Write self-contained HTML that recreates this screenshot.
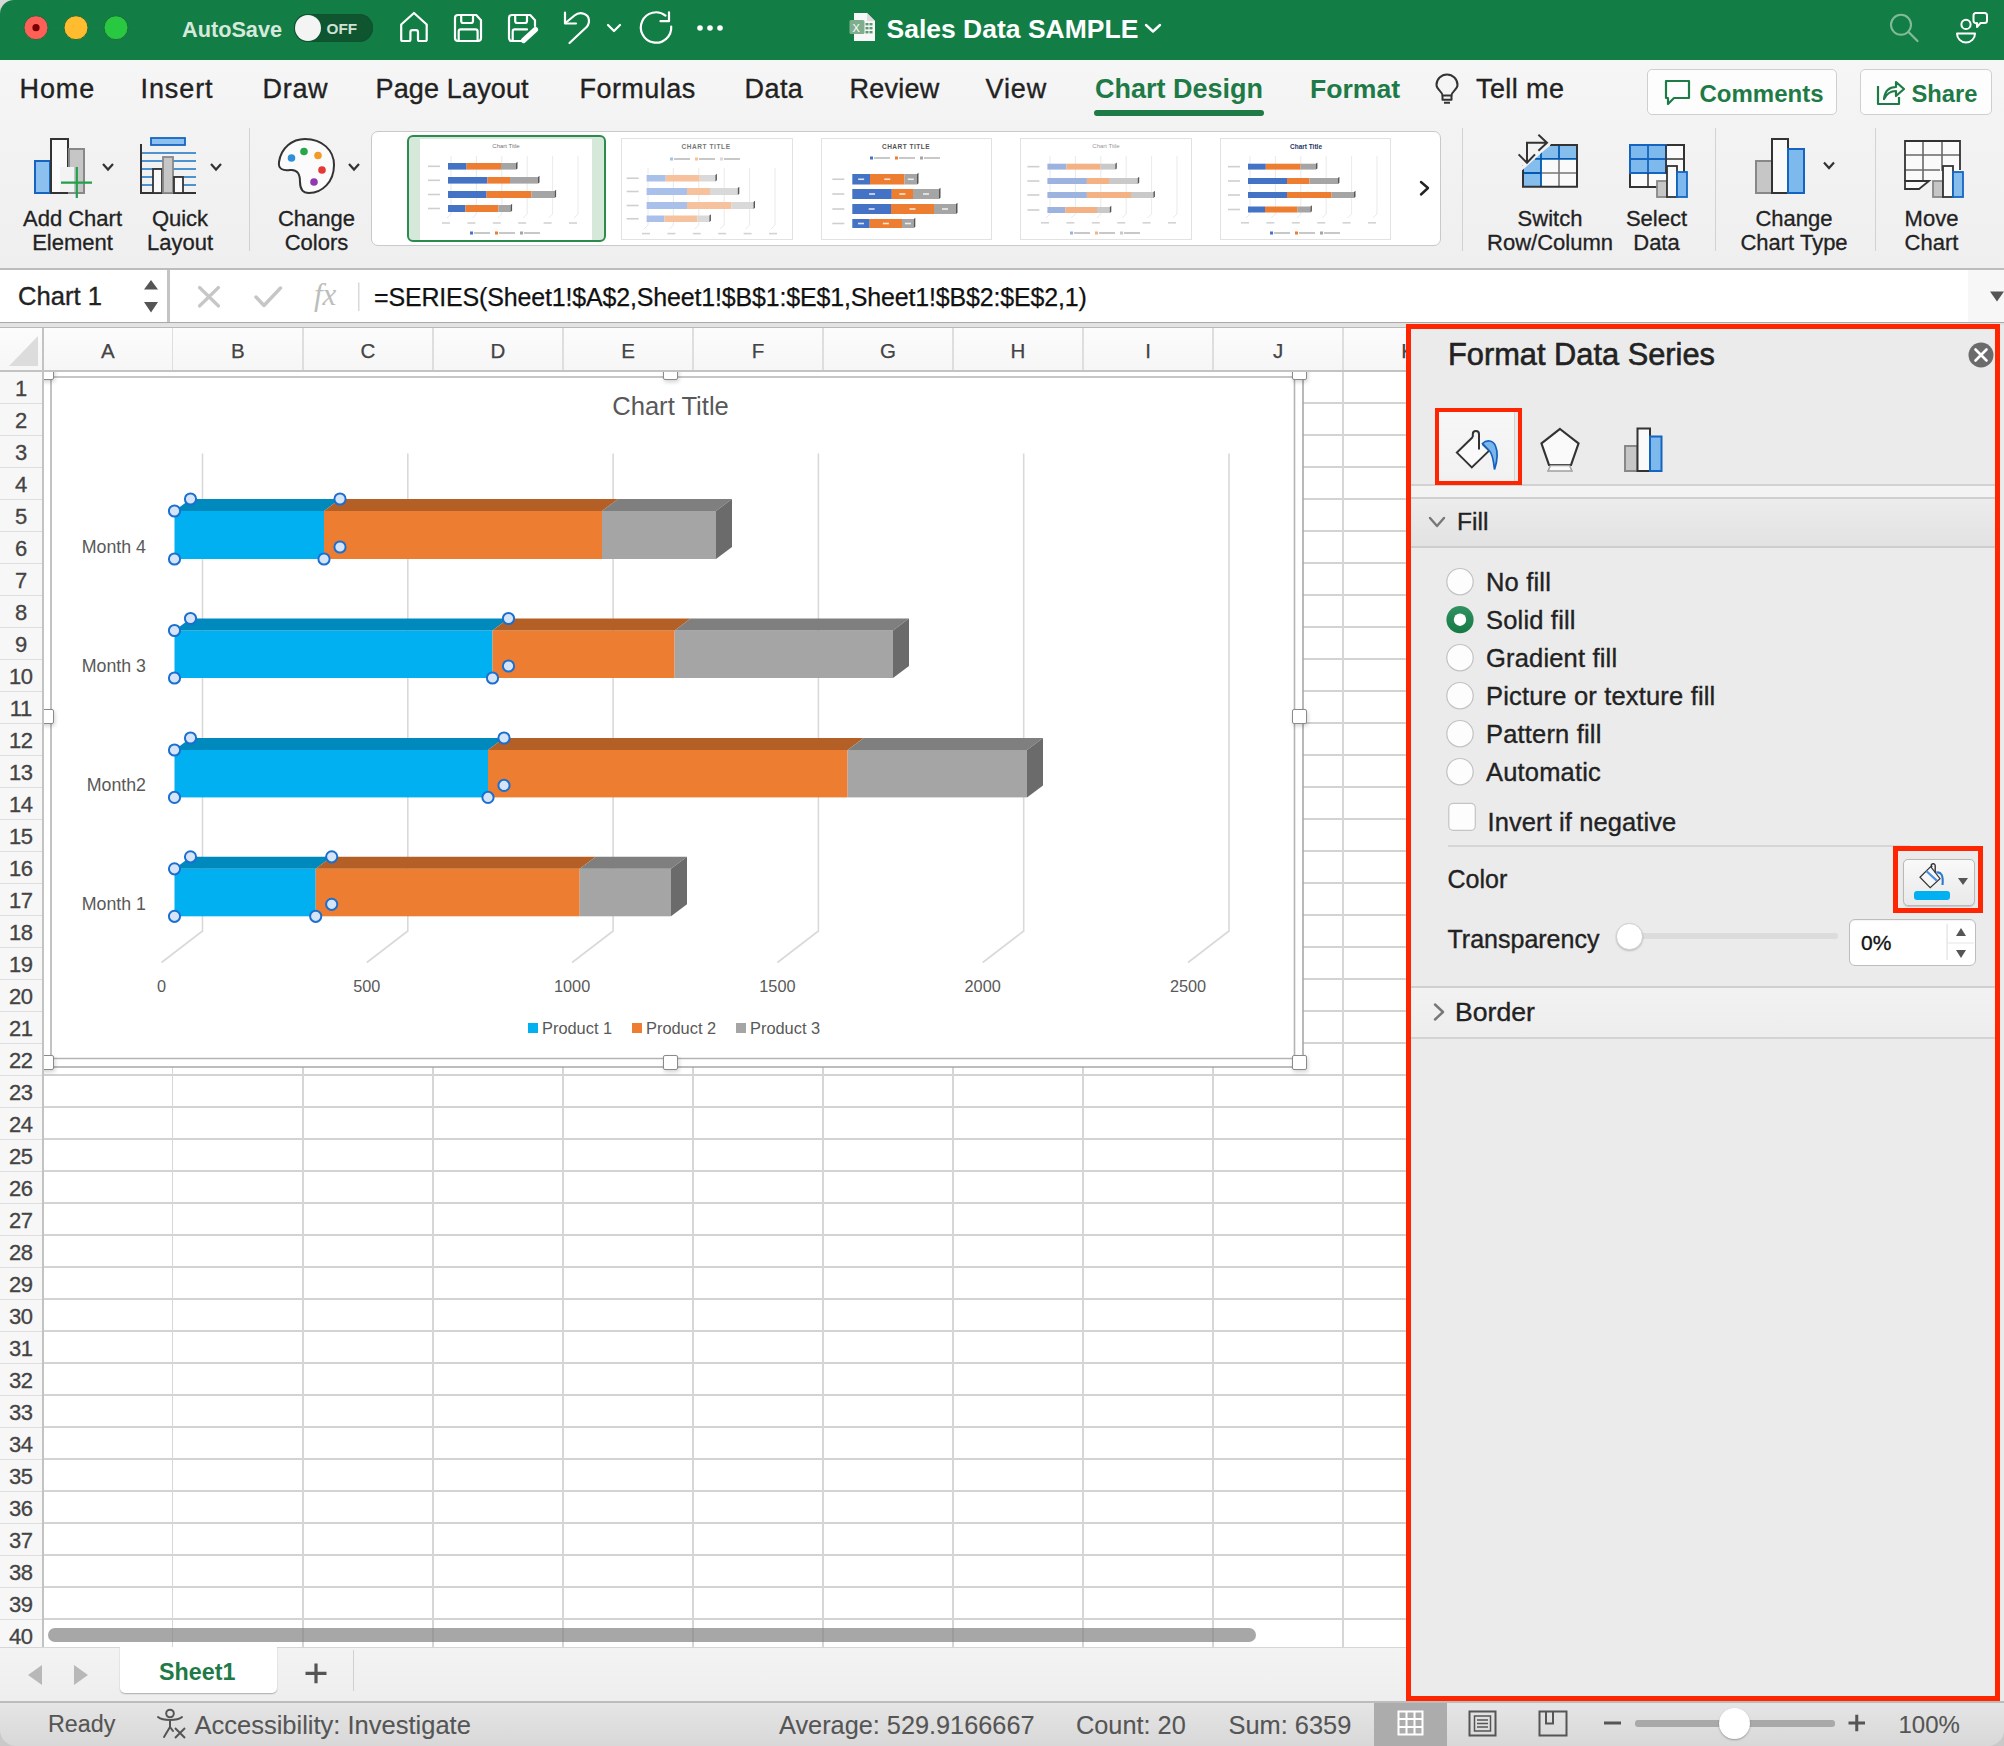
<!DOCTYPE html>
<html><head><meta charset="utf-8"><title>Excel</title>
<style>
*{box-sizing:border-box;margin:0;padding:0}
html,body{width:2004px;height:1746px;overflow:hidden;background:#fff}
body{position:relative;font-family:"Liberation Sans",sans-serif;color:#222}
.a{position:absolute}
.t{position:absolute;white-space:nowrap;line-height:1}
svg{position:absolute;overflow:visible}
</style></head><body>

<div class="a" style="left:0;top:0;width:2004px;height:60px;background:#127e45"></div>
<!-- window corner -->
<svg style="left:0;top:0" width="14" height="14"><path d="M0 0 H14 A14 14 0 0 0 0 14 Z" fill="#d8d8d8"/></svg>
<!-- traffic lights -->
<svg style="left:0;top:0" width="140" height="60">
 <circle cx="36" cy="27.7" r="12" fill="#fe5f57" stroke="#1d6b3c" stroke-width="1"/>
 <circle cx="36" cy="27.7" r="3.6" fill="#7a0000"/>
 <circle cx="76" cy="27.7" r="12" fill="#febc2e" stroke="#1d6b3c" stroke-width="1"/>
 <circle cx="116" cy="27.7" r="12" fill="#28c840" stroke="#1d6b3c" stroke-width="1"/>
</svg>
<div class="t" style="left:182px;top:18.5px;font-size:21.7px;color:#d7e9dd;font-weight:bold;">AutoSave</div>

<div class="a" style="left:294px;top:14px;width:79px;height:28px;border-radius:14px;background:#0f5530;box-shadow:inset 0 0 1px rgba(0,0,0,.4)"></div>
<div class="a" style="left:295px;top:15px;width:26px;height:26px;border-radius:13px;background:#f4f4f4"></div>
<div class="t" style="left:326.5px;top:21px;font-size:15.3px;color:#cfe2d5;font-weight:bold;">OFF</div>

<svg style="left:0;top:0" width="760" height="60" fill="none" stroke="#fff" stroke-width="2.2" stroke-linejoin="round" stroke-linecap="round">
 <!-- home -->
 <path d="M401.2 24.5 L414 13 L426.7 24.5 V39.5 Q426.7 41 425.2 41 H419.5 Q418 41 418 39.5 V32.2 Q418 30.2 416 30.2 H412.4 Q410.4 30.2 410.4 32.2 V39.5 Q410.4 41 408.9 41 H402.7 Q401.2 41 401.2 39.5 Z"/>
 <!-- save -->
 <path d="M458 15 H476.2 L481 20.2 V38 Q481 41 478 41 H458 Q455 41 455 38 V18 Q455 15 458 15 Z"/>
 <path d="M461.2 15 V21 Q461.2 23 463.2 23 H471 Q473 23 473 21 V15"/>
 <path d="M458.7 41 V31.4 Q458.7 29.4 460.7 29.4 H475.6 Q477.6 29.4 477.6 31.4 V41"/>
 <!-- save as -->
 <path d="M521 41 H512 Q509 41 509 38 V18 Q509 15 512 15 H530.2 L535 20.2 V26"/>
 <path d="M515.2 15 V21 Q515.2 23 517.2 23 H525 Q527 23 527 21 V15"/>
 <path d="M512.7 41 V31.4 Q512.7 29.4 514.7 29.4 H527"/>
 <path d="M523.5 40.5 L535.5 29.5" stroke-width="5.2"/>
 <!-- undo -->
 <path d="M565 12.5 V23.5 H576"/>
 <path d="M566 22.5 L574.5 15.5 C580 11 589 13.5 589 21 C589 24.5 587.5 26.5 585 28.5 L569.5 43"/>
 <!-- chevron -->
 <path d="M608 25 L614 31 L620 25"/>
 <!-- redo -->
 <path d="M671.2 26.5 A15.2 15.2 0 1 1 665.5 15.6"/>
 <path d="M669 12.3 V21.2 H660.5"/>
</svg>
<svg style="left:0;top:0" width="760" height="60">
 <circle cx="700" cy="28" r="2.8" fill="#fff"/><circle cx="710" cy="28" r="2.8" fill="#fff"/><circle cx="720" cy="28" r="2.8" fill="#fff"/>
</svg>
<!-- doc icon -->
<svg style="left:848px;top:12px" width="32" height="32">
 <path d="M6 1 H19 L27 9 V29 H6 Z" fill="#f7f7f7"/>
 <path d="M19 1 V9 H27" fill="#dcdcdc"/>
 <rect x="1.5" y="8" width="15" height="14" rx="1.5" fill="#7fae8f"/>
 <text x="4.5" y="19.5" font-size="11" fill="#fff" font-family="Liberation Sans">X</text>
 <g fill="#5a9a6e"><rect x="17.5" y="11" width="3" height="2.4"/><rect x="21.5" y="11" width="3" height="2.4"/><rect x="17.5" y="15" width="3" height="2.4"/><rect x="21.5" y="15" width="3" height="2.4"/><rect x="17.5" y="19" width="3" height="2.4"/><rect x="21.5" y="19" width="3" height="2.4"/></g>
</svg>
<div class="t" style="left:886.5px;top:15.5px;font-size:26.5px;color:#ffffff;font-weight:bold;">Sales Data SAMPLE</div>

<svg style="left:0;top:0" width="2004" height="60" fill="none" stroke-linecap="round" stroke-linejoin="round">
 <path d="M1146 25 L1153 31.5 L1160 25" stroke="#fff" stroke-width="2.4"/>
 <circle cx="1901" cy="24.8" r="10" stroke="#82bb98" stroke-width="2"/>
 <path d="M1908.5 32 L1917.5 41" stroke="#82bb98" stroke-width="2.2"/>
 <circle cx="1966" cy="24.4" r="4.6" stroke="#fff" stroke-width="2"/>
 <path d="M1957 33.5 H1975 A9 9 0 0 1 1957 33.5 Z" stroke="#fff" stroke-width="2"/>
 <path d="M1975.5 13 H1985 A2.5 2.5 0 0 1 1987 15.5 V20.5 A2.5 2.5 0 0 1 1984.5 23 H1980.5 L1977 27 V23 A2.5 2.5 0 0 1 1973.5 20.5 V15.5 A2.5 2.5 0 0 1 1975.5 13 Z" stroke="#fff" stroke-width="2"/>
</svg>

<div class="a" style="left:0;top:60px;width:2004px;height:209px;background:linear-gradient(#f6f6f6,#f3f3f3 30%,#efefef)"></div>
<div class="a" style="left:0;top:268px;width:2004px;height:2px;background:#bdbdbd"></div>
<div class="t" style="left:19.5px;top:76px;font-size:27px;color:#222;font-weight:normal;letter-spacing:0.9px;-webkit-text-stroke:0.35px #222">Home</div>
<div class="t" style="left:140.5px;top:76px;font-size:27px;color:#222;font-weight:normal;letter-spacing:0.9px;-webkit-text-stroke:0.35px #222">Insert</div>
<div class="t" style="left:262.5px;top:76px;font-size:27px;color:#222;font-weight:normal;letter-spacing:0.7px;-webkit-text-stroke:0.35px #222">Draw</div>
<div class="t" style="left:375.5px;top:76px;font-size:27px;color:#222;font-weight:normal;letter-spacing:0.15px;-webkit-text-stroke:0.35px #222">Page Layout</div>
<div class="t" style="left:579.5px;top:76px;font-size:27px;color:#222;font-weight:normal;letter-spacing:0.45px;-webkit-text-stroke:0.35px #222">Formulas</div>
<div class="t" style="left:744.5px;top:76px;font-size:27px;color:#222;font-weight:normal;letter-spacing:0.45px;-webkit-text-stroke:0.35px #222">Data</div>
<div class="t" style="left:849.5px;top:76px;font-size:27px;color:#222;font-weight:normal;letter-spacing:0.25px;-webkit-text-stroke:0.35px #222">Review</div>
<div class="t" style="left:985.5px;top:76px;font-size:27px;color:#222;font-weight:normal;letter-spacing:0.9px;-webkit-text-stroke:0.35px #222">View</div>
<div class="t" style="left:1095px;top:76px;font-size:27px;color:#1e7a46;font-weight:bold;">Chart Design</div>
<div class="t" style="left:1310px;top:76px;font-size:26.6px;color:#1e7a46;font-weight:bold;">Format</div>
<div class="t" style="left:1476px;top:76px;font-size:27px;color:#222;font-weight:normal;letter-spacing:0.4px;-webkit-text-stroke:0.35px #222">Tell me</div>

<div class="a" style="left:1094px;top:110px;width:170px;height:6px;border-radius:3px;background:#1e7a46"></div>
<svg style="left:0;top:0" width="2004" height="130" fill="none" stroke="#333" stroke-width="2" stroke-linejoin="round">
 <path d="M1442.5 95.5 C1442.5 91.5 1436.5 89.5 1436.5 85 A10.5 10.5 0 0 1 1457.5 85 C1457.5 89.5 1451.5 91.5 1451.5 95.5 Z"/>
 <path d="M1442.5 95.5 V99.8 H1451.5 V95.5 M1444 102.8 H1450"/>
</svg>
<div class="a" style="left:1647px;top:69px;width:190px;height:46px;border-radius:5px;background:#fdfdfd;border:1.5px solid #cfcfcf"></div>
<div class="a" style="left:1860px;top:69px;width:132px;height:46px;border-radius:5px;background:#fdfdfd;border:1.5px solid #cfcfcf"></div>
<svg style="left:0;top:0" width="2004" height="130" fill="none" stroke="#1e7a46" stroke-width="2.2" stroke-linejoin="round">
 <path d="M1666 81 H1689 V98 H1674 L1668 104 V98 H1666 Z"/>
 <path d="M1878 86 V104 H1899 V97"/>
 <path d="M1884 99 C1885 90 1890 87 1896 87 V82 L1904 89 L1896 96 V91 C1891 91 1887 93 1884 99 Z"/>
</svg>
<div class="t" style="left:1699.5px;top:81.5px;font-size:24px;color:#1e7a46;font-weight:bold;">Comments</div>
<div class="t" style="left:1911.5px;top:81.5px;font-size:23.75px;color:#1e7a46;font-weight:bold;">Share</div>

<div class="a" style="left:248.5px;top:128px;width:1.5px;height:123px;background:#d2d2d2"></div>
<div class="a" style="left:1461.5px;top:128px;width:1.5px;height:123px;background:#d2d2d2"></div>
<div class="a" style="left:1714.5px;top:128px;width:1.5px;height:123px;background:#d2d2d2"></div>
<div class="a" style="left:1874.5px;top:128px;width:1.5px;height:123px;background:#d2d2d2"></div>
<div class="t" style="left:-77.5px;width:300px;text-align:center;top:208px;font-size:22px;color:#222;-webkit-text-stroke:0.3px #222">Add Chart</div>
<div class="t" style="left:-77.5px;width:300px;text-align:center;top:232px;font-size:22px;color:#222;-webkit-text-stroke:0.3px #222">Element</div>
<div class="t" style="left:30px;width:300px;text-align:center;top:208px;font-size:22px;color:#222;-webkit-text-stroke:0.3px #222">Quick</div>
<div class="t" style="left:30px;width:300px;text-align:center;top:232px;font-size:22px;color:#222;-webkit-text-stroke:0.3px #222">Layout</div>
<div class="t" style="left:166.5px;width:300px;text-align:center;top:208px;font-size:22px;color:#222;-webkit-text-stroke:0.3px #222">Change</div>
<div class="t" style="left:166.5px;width:300px;text-align:center;top:232px;font-size:22px;color:#222;-webkit-text-stroke:0.3px #222">Colors</div>
<div class="t" style="left:1400px;width:300px;text-align:center;top:208px;font-size:22px;color:#222;-webkit-text-stroke:0.3px #222">Switch</div>
<div class="t" style="left:1400px;width:300px;text-align:center;top:232px;font-size:22px;color:#222;-webkit-text-stroke:0.3px #222">Row/Column</div>
<div class="t" style="left:1506.5px;width:300px;text-align:center;top:208px;font-size:22px;color:#222;-webkit-text-stroke:0.3px #222">Select</div>
<div class="t" style="left:1506.5px;width:300px;text-align:center;top:232px;font-size:22px;color:#222;-webkit-text-stroke:0.3px #222">Data</div>
<div class="t" style="left:1644px;width:300px;text-align:center;top:208px;font-size:22px;color:#222;-webkit-text-stroke:0.3px #222">Change</div>
<div class="t" style="left:1644px;width:300px;text-align:center;top:232px;font-size:22px;color:#222;-webkit-text-stroke:0.3px #222">Chart Type</div>
<div class="t" style="left:1781.5px;width:300px;text-align:center;top:208px;font-size:22px;color:#222;-webkit-text-stroke:0.3px #222">Move</div>
<div class="t" style="left:1781.5px;width:300px;text-align:center;top:232px;font-size:22px;color:#222;-webkit-text-stroke:0.3px #222">Chart</div>

<svg style="left:0;top:0" width="2004" height="270" stroke-linejoin="miter">
 <!-- Add chart element -->
 <rect x="35" y="161" width="15" height="32" fill="#8cc0ef" stroke="#1565c0" stroke-width="2"/>
 <rect x="51" y="139" width="17" height="54" fill="#fafafa" stroke="#333" stroke-width="2"/>
 <rect x="69" y="149" width="15" height="44" fill="#c6c6c6" stroke="#888" stroke-width="2"/>
 <rect x="60" y="167" width="14" height="25" fill="#f3f3f3"/>
 <path d="M61 182.6 H92 M76.8 167 V198" stroke="#22a04b" stroke-width="2.2" fill="none"/>
 <path d="M103 164 L108 169.5 L113 164" stroke="#333" stroke-width="2.2" fill="none"/>
 <!-- Quick layout -->
 <path d="M141 144 V193 H196" stroke="#333" stroke-width="2" fill="none"/>
 <path d="M142 153 H196 M142 161 H196 M142 169 H196 M142 177 H196 M142 185 H196" stroke="#1a73c8" stroke-width="1.6"/>
 <rect x="151" y="138" width="34" height="7" fill="#8cc0ef" stroke="#1565c0" stroke-width="1.8"/>
 <rect x="153" y="169" width="9" height="24" fill="#fafafa" stroke="#333" stroke-width="1.8"/>
 <rect x="163" y="157" width="10" height="36" fill="#c6c6c6" stroke="#888" stroke-width="1.8"/>
 <rect x="174" y="177" width="9" height="16" fill="#fafafa" stroke="#333" stroke-width="1.8"/>
 <path d="M211 164 L216 169.5 L221 164" stroke="#333" stroke-width="2.2" fill="none"/>
 <!-- palette -->
 <path d="M305 139 C322 139 334 150 334 165 C334 182 322 193 309 193 C301 193 300 187 300 182 C300 175 298 169 290 170 C283 171 278 169 279 162 C281 148 292 139 305 139 Z" fill="#fbfbfb" stroke="#333" stroke-width="2"/>
 <circle cx="291.5" cy="158" r="3.8" fill="#2f8fd8"/>
 <circle cx="304" cy="151.5" r="3.8" fill="#2aa64a"/>
 <circle cx="318" cy="155.5" r="3.8" fill="#f39a2a"/>
 <circle cx="322" cy="170" r="3.8" fill="#e53935"/>
 <circle cx="314" cy="182" r="3.8" fill="#8e3ab0"/>
 <path d="M349 164 L354 169.5 L359 164" stroke="#333" stroke-width="2.2" fill="none"/>

 <!-- switch row/column -->
 <path d="M1523 166 L1551 145 H1577 V186.8 H1523 Z" fill="#fafafa"/>
 <path d="M1524 166 L1551 145 H1577 V158.8 H1541 V186.8 H1523 V166 Z" fill="#85bdec"/>
 <path d="M1559 158.8 V186.8 M1541 173 H1577" stroke="#777" stroke-width="1.6" fill="none"/>
 <path d="M1541 152 V186.8 M1559 145 V158.8 M1535 158.8 H1577 M1523 173 H1541" stroke="#0058b0" stroke-width="1.8" fill="none"/>
 <path d="M1523 165 V186.8 H1577 V145 H1550" stroke="#333" stroke-width="2" fill="none"/>
 <path d="M1521 169 L1553 140" stroke="#f3f3f3" stroke-width="3.5"/>
 <path d="M1527 162 V142.8 H1546.5 M1518.6 154.4 L1527 162.8 L1535 154.4 M1538.4 134.8 L1547 142.8 L1538.4 150.8" stroke="#333" stroke-width="2" fill="none"/>
 <!-- select data -->
 <rect x="1630" y="145" width="54" height="42" fill="#fafafa" stroke="#333" stroke-width="2"/>
 <rect x="1630" y="145" width="36" height="28" fill="#7db9ec" stroke="#1565c0" stroke-width="2"/>
 <path d="M1648 145 V173 M1630 159 H1666" stroke="#1565c0" stroke-width="1.8"/>
 <path d="M1666 145 V173 H1684 M1666 159 H1684 M1648 173 V187" stroke="#333" stroke-width="1.5" fill="none"/>
 <rect x="1657" y="181" width="10" height="16" fill="#c6c6c6" stroke="#888" stroke-width="1.8"/>
 <rect x="1667" y="166" width="10" height="31" fill="#fafafa" stroke="#333" stroke-width="1.8"/>
 <rect x="1677" y="172" width="10" height="25" fill="#7db9ec" stroke="#1565c0" stroke-width="1.8"/>
 <!-- change chart type -->
 <rect x="1756" y="161" width="16" height="32" fill="#c6c6c6" stroke="#888" stroke-width="2"/>
 <rect x="1772" y="139" width="16" height="54" fill="#fafafa" stroke="#333" stroke-width="2"/>
 <rect x="1788" y="149" width="16" height="44" fill="#7db9ec" stroke="#1565c0" stroke-width="2"/>
 <path d="M1824 162.5 L1829 168 L1834 162.5" stroke="#333" stroke-width="2.2" fill="none"/>
 <!-- move chart -->
 <rect x="1905" y="141" width="55" height="40" fill="#fafafa"/>
 <path d="M1923 141 V185 M1942 141 V171 M1905 155 H1960 M1905 170 H1940" stroke="#6a6a6a" stroke-width="1.6" fill="none"/>
 <path d="M1905 181 V141 H1960 V170" stroke="#333" stroke-width="1.8" fill="none"/>
 <path d="M1905 181 H1929 L1919 189 H1905 Z" fill="#fafafa" stroke="#333" stroke-width="1.8" stroke-linejoin="miter"/>
 <rect x="1933" y="181" width="10" height="16" fill="#c6c6c6" stroke="#888" stroke-width="1.8"/>
 <rect x="1943" y="166" width="10" height="31" fill="#fafafa" stroke="#333" stroke-width="1.8"/>
 <rect x="1953" y="172" width="10" height="25" fill="#85bdec" stroke="#1565c0" stroke-width="1.8"/>
</svg>

<div class="a" style="left:371px;top:130.5px;width:1070px;height:115px;border-radius:7px;background:#fff;border:1.5px solid #c9c9c9"></div>
<div class="a" style="left:406.5px;top:134.5px;width:199px;height:107px;border-radius:6px;background:#d6e8da;border:2.5px solid #2e8b4e"></div>
<div class="a" style="left:420px;top:138.5px;width:171.5px;height:101.5px;background:#fff"></div>
<div class="a" style="left:620.5px;top:138px;width:172px;height:102px;background:#fff;border:1px solid #e2e2e2"></div>
<div class="a" style="left:820.5px;top:138px;width:171px;height:102px;background:#fff;border:1px solid #e2e2e2"></div>
<div class="a" style="left:1020px;top:138px;width:172px;height:102px;background:#fff;border:1px solid #e2e2e2"></div>
<div class="a" style="left:1220px;top:138px;width:171px;height:102px;background:#fff;border:1px solid #e2e2e2"></div>
<svg style="left:0;top:0" width="2004" height="270" fill="none">
 <path d="M1421 182 L1428 188 L1421 194.5" stroke="#222" stroke-width="2.4" stroke-linejoin="round" stroke-linecap="round"/>
</svg>
<svg style="left:0;top:0" width="2004" height="270">
<path d="M451.0 156 V214 L447.0 218" stroke="#e3e3e3" stroke-width="0.8" fill="none"/><path d="M476.4 156 V214 L472.4 218" stroke="#e3e3e3" stroke-width="0.8" fill="none"/><path d="M501.8 156 V214 L497.8 218" stroke="#e3e3e3" stroke-width="0.8" fill="none"/><path d="M527.2 156 V214 L523.2 218" stroke="#e3e3e3" stroke-width="0.8" fill="none"/><path d="M552.6 156 V214 L548.6 218" stroke="#e3e3e3" stroke-width="0.8" fill="none"/><path d="M578.0 156 V214 L574.0 218" stroke="#e3e3e3" stroke-width="0.8" fill="none"/><rect x="448" y="163" width="18.600000000000023" height="6.599999999999994" fill="#4472c4"/><rect x="466.6" y="163" width="34.39999999999998" height="6.599999999999994" fill="#ed7d31"/><rect x="501" y="163" width="15" height="6.599999999999994" fill="#a5a5a5"/><path d="M516 163 l1.5 -1.2 v6.599999999999994 l-1.5 1.2 Z" fill="#555"/><rect x="448" y="177" width="39.39999999999998" height="6.599999999999994" fill="#4472c4"/><rect x="487.4" y="177" width="22.600000000000023" height="6.599999999999994" fill="#ed7d31"/><rect x="510" y="177" width="28" height="6.599999999999994" fill="#a5a5a5"/><path d="M538 177 l1.5 -1.2 v6.599999999999994 l-1.5 1.2 Z" fill="#555"/><rect x="448" y="191" width="38.60000000000002" height="7" fill="#4472c4"/><rect x="486.6" y="191" width="44.799999999999955" height="7" fill="#ed7d31"/><rect x="531.4" y="191" width="23.200000000000045" height="7" fill="#a5a5a5"/><path d="M554.6 191 l1.5 -1.2 v7 l-1.5 1.2 Z" fill="#555"/><rect x="448" y="205" width="17.399999999999977" height="7" fill="#4472c4"/><rect x="465.4" y="205" width="33.0" height="7" fill="#ed7d31"/><rect x="498.4" y="205" width="12.200000000000045" height="7" fill="#a5a5a5"/><path d="M510.6 205 l1.5 -1.2 v7 l-1.5 1.2 Z" fill="#555"/><rect x="428" y="165.5" width="12" height="1.6" fill="#cfcfcf"/><rect x="428" y="179.5" width="12" height="1.6" fill="#cfcfcf"/><rect x="428" y="193.7" width="12" height="1.6" fill="#cfcfcf"/><rect x="428" y="207.7" width="12" height="1.6" fill="#cfcfcf"/><rect x="442.0" y="222.2" width="8" height="1.6" fill="#d3d3d3"/><rect x="467.4" y="222.2" width="8" height="1.6" fill="#d3d3d3"/><rect x="492.8" y="222.2" width="8" height="1.6" fill="#d3d3d3"/><rect x="518.2" y="222.2" width="8" height="1.6" fill="#d3d3d3"/><rect x="543.6" y="222.2" width="8" height="1.6" fill="#d3d3d3"/><rect x="569.0" y="222.2" width="8" height="1.6" fill="#d3d3d3"/><text x="506" y="148" text-anchor="middle" font-family="Liberation Sans" font-size="6" fill="#777">Chart Title</text><rect x="470" y="231.5" width="3" height="3" fill="#4472c4"/><rect x="474" y="232" width="16" height="2" fill="#c8c8c8"/><rect x="495" y="231.5" width="3" height="3" fill="#ed7d31"/><rect x="499" y="232" width="16" height="2" fill="#c8c8c8"/><rect x="520" y="231.5" width="3" height="3" fill="#a5a5a5"/><rect x="524" y="232" width="16" height="2" fill="#c8c8c8"/></svg>
<svg style="left:0;top:0" width="2004" height="270">
<path d="M648.0 168 V225 L644.0 229" stroke="#e3e3e3" stroke-width="0.8" fill="none"/><path d="M673.4 168 V225 L669.4 229" stroke="#e3e3e3" stroke-width="0.8" fill="none"/><path d="M698.8 168 V225 L694.8 229" stroke="#e3e3e3" stroke-width="0.8" fill="none"/><path d="M724.2 168 V225 L720.2 229" stroke="#e3e3e3" stroke-width="0.8" fill="none"/><path d="M749.6 168 V225 L745.6 229" stroke="#e3e3e3" stroke-width="0.8" fill="none"/><path d="M775.0 168 V225 L771.0 229" stroke="#e3e3e3" stroke-width="0.8" fill="none"/><rect x="646.6" y="175" width="19.100000000000023" height="6.5" fill="#a9c1ea"/><rect x="665.7" y="175" width="34.0" height="6.5" fill="#f6c29d"/><rect x="699.7" y="175" width="15.699999999999932" height="6.5" fill="#d9d9d9"/><path d="M715.4 175 l1.5 -1.2 v6.5 l-1.5 1.2 Z" fill="#555"/><rect x="646.6" y="188" width="40.39999999999998" height="7" fill="#a9c1ea"/><rect x="687" y="188" width="23" height="7" fill="#f6c29d"/><rect x="710" y="188" width="27.799999999999955" height="7" fill="#d9d9d9"/><path d="M737.8 188 l1.5 -1.2 v7 l-1.5 1.2 Z" fill="#555"/><rect x="646.6" y="202" width="40.39999999999998" height="7" fill="#a9c1ea"/><rect x="687" y="202" width="44.5" height="7" fill="#f6c29d"/><rect x="731.5" y="202" width="22.0" height="7" fill="#d9d9d9"/><path d="M753.5 202 l1.5 -1.2 v7 l-1.5 1.2 Z" fill="#555"/><rect x="646.6" y="215.5" width="17.899999999999977" height="6.5" fill="#a9c1ea"/><rect x="664.5" y="215.5" width="33.0" height="6.5" fill="#f6c29d"/><rect x="697.5" y="215.5" width="11.899999999999977" height="6.5" fill="#d9d9d9"/><path d="M709.4 215.5 l1.5 -1.2 v6.5 l-1.5 1.2 Z" fill="#555"/><rect x="626.6" y="177.45" width="12" height="1.6" fill="#cfcfcf"/><rect x="626.6" y="190.7" width="12" height="1.6" fill="#cfcfcf"/><rect x="626.6" y="204.7" width="12" height="1.6" fill="#cfcfcf"/><rect x="626.6" y="217.95" width="12" height="1.6" fill="#cfcfcf"/><rect x="642.0" y="232.79999999999998" width="8" height="1.6" fill="#d3d3d3"/><rect x="667.4" y="232.79999999999998" width="8" height="1.6" fill="#d3d3d3"/><rect x="692.8" y="232.79999999999998" width="8" height="1.6" fill="#d3d3d3"/><rect x="718.2" y="232.79999999999998" width="8" height="1.6" fill="#d3d3d3"/><rect x="743.6" y="232.79999999999998" width="8" height="1.6" fill="#d3d3d3"/><rect x="769.0" y="232.79999999999998" width="8" height="1.6" fill="#d3d3d3"/><text x="706" y="149" text-anchor="middle" font-family="Liberation Sans" font-size="6.5" font-weight="bold" fill="#777" letter-spacing="0.6">CHART TITLE</text><rect x="670" y="157.5" width="3" height="3" fill="#a9c1ea"/><rect x="674" y="158" width="16" height="2" fill="#c8c8c8"/><rect x="695" y="157.5" width="3" height="3" fill="#f6c29d"/><rect x="699" y="158" width="16" height="2" fill="#c8c8c8"/><rect x="720" y="157.5" width="3" height="3" fill="#d9d9d9"/><rect x="724" y="158" width="16" height="2" fill="#c8c8c8"/></svg>
<svg style="left:0;top:0" width="2004" height="270">
<rect x="852.3" y="174" width="17.700000000000045" height="10.5" fill="#4472c4"/><rect x="870" y="174" width="34.5" height="10.5" fill="#ed7d31"/><rect x="904.5" y="174" width="12.5" height="10.5" fill="#a5a5a5"/><path d="M917 174 l1.5 -1.2 v10.5 l-1.5 1.2 Z" fill="#555"/><rect x="858.15" y="178.45" width="6" height="1.6" fill="#fff" opacity=".8"/><rect x="884.25" y="178.45" width="6" height="1.6" fill="#fff" opacity=".8"/><rect x="907.75" y="178.45" width="6" height="1.6" fill="#fff" opacity=".8"/><rect x="852.3" y="189" width="39.5" height="10" fill="#4472c4"/><rect x="891.8" y="189" width="21.200000000000045" height="10" fill="#ed7d31"/><rect x="913" y="189" width="26" height="10" fill="#a5a5a5"/><path d="M939 189 l1.5 -1.2 v10 l-1.5 1.2 Z" fill="#555"/><rect x="869.05" y="193.2" width="6" height="1.6" fill="#fff" opacity=".8"/><rect x="899.4" y="193.2" width="6" height="1.6" fill="#fff" opacity=".8"/><rect x="923.0" y="193.2" width="6" height="1.6" fill="#fff" opacity=".8"/><rect x="852.3" y="204" width="38.700000000000045" height="10" fill="#4472c4"/><rect x="891" y="204" width="43" height="10" fill="#ed7d31"/><rect x="934" y="204" width="22" height="10" fill="#a5a5a5"/><path d="M956 204 l1.5 -1.2 v10 l-1.5 1.2 Z" fill="#555"/><rect x="868.65" y="208.2" width="6" height="1.6" fill="#fff" opacity=".8"/><rect x="909.5" y="208.2" width="6" height="1.6" fill="#fff" opacity=".8"/><rect x="942.0" y="208.2" width="6" height="1.6" fill="#fff" opacity=".8"/><rect x="852.3" y="219" width="17.40000000000009" height="9" fill="#4472c4"/><rect x="869.7" y="219" width="32.299999999999955" height="9" fill="#ed7d31"/><rect x="902" y="219" width="11.799999999999955" height="9" fill="#a5a5a5"/><path d="M913.8 219 l1.5 -1.2 v9 l-1.5 1.2 Z" fill="#555"/><rect x="858.0" y="222.7" width="6" height="1.6" fill="#fff" opacity=".8"/><rect x="882.85" y="222.7" width="6" height="1.6" fill="#fff" opacity=".8"/><rect x="904.9" y="222.7" width="6" height="1.6" fill="#fff" opacity=".8"/><rect x="832.3" y="178.45" width="12" height="1.6" fill="#cfcfcf"/><rect x="832.3" y="193.2" width="12" height="1.6" fill="#cfcfcf"/><rect x="832.3" y="208.2" width="12" height="1.6" fill="#cfcfcf"/><rect x="832.3" y="222.7" width="12" height="1.6" fill="#cfcfcf"/><text x="906" y="149" text-anchor="middle" font-family="Liberation Sans" font-size="6.5" font-weight="bold" fill="#555" letter-spacing="0.5">CHART TITLE</text><rect x="870" y="156.5" width="3" height="3" fill="#4472c4"/><rect x="874" y="157" width="16" height="2" fill="#c8c8c8"/><rect x="895" y="156.5" width="3" height="3" fill="#ed7d31"/><rect x="899" y="157" width="16" height="2" fill="#c8c8c8"/><rect x="920" y="156.5" width="3" height="3" fill="#a5a5a5"/><rect x="924" y="157" width="16" height="2" fill="#c8c8c8"/></svg>
<svg style="left:0;top:0" width="2004" height="270">
<path d="M1050.0 156 V214 L1046.0 218" stroke="#e3e3e3" stroke-width="0.8" fill="none"/><path d="M1075.4 156 V214 L1071.4 218" stroke="#e3e3e3" stroke-width="0.8" fill="none"/><path d="M1100.8 156 V214 L1096.8 218" stroke="#e3e3e3" stroke-width="0.8" fill="none"/><path d="M1126.2 156 V214 L1122.2 218" stroke="#e3e3e3" stroke-width="0.8" fill="none"/><path d="M1151.6 156 V214 L1147.6 218" stroke="#e3e3e3" stroke-width="0.8" fill="none"/><path d="M1177.0 156 V214 L1173.0 218" stroke="#e3e3e3" stroke-width="0.8" fill="none"/><rect x="1047.4" y="163.7" width="19.09999999999991" height="5.900000000000006" fill="#9db3df"/><rect x="1066.5" y="163.7" width="33.90000000000009" height="5.900000000000006" fill="#f4b183"/><rect x="1100.4" y="163.7" width="14.899999999999864" height="5.900000000000006" fill="#c9c9c9"/><path d="M1115.3 163.7 l1.5 -1.2 v5.900000000000006 l-1.5 1.2 Z" fill="#555"/><rect x="1047.4" y="178" width="39.5" height="6" fill="#9db3df"/><rect x="1086.9" y="178" width="22.09999999999991" height="6" fill="#f4b183"/><rect x="1109" y="178" width="28.700000000000045" height="6" fill="#c9c9c9"/><path d="M1137.7 178 l1.5 -1.2 v6 l-1.5 1.2 Z" fill="#555"/><rect x="1047.4" y="192" width="39.5" height="6" fill="#9db3df"/><rect x="1086.9" y="192" width="44.09999999999991" height="6" fill="#f4b183"/><rect x="1131" y="192" width="22.40000000000009" height="6" fill="#c9c9c9"/><path d="M1153.4 192 l1.5 -1.2 v6 l-1.5 1.2 Z" fill="#555"/><rect x="1047.4" y="207" width="17.799999999999955" height="6" fill="#9db3df"/><rect x="1065.2" y="207" width="31.799999999999955" height="6" fill="#f4b183"/><rect x="1097" y="207" width="12.799999999999955" height="6" fill="#c9c9c9"/><path d="M1109.8 207 l1.5 -1.2 v6 l-1.5 1.2 Z" fill="#555"/><rect x="1027.4" y="165.84999999999997" width="12" height="1.6" fill="#cfcfcf"/><rect x="1027.4" y="180.2" width="12" height="1.6" fill="#cfcfcf"/><rect x="1027.4" y="194.2" width="12" height="1.6" fill="#cfcfcf"/><rect x="1027.4" y="209.2" width="12" height="1.6" fill="#cfcfcf"/><rect x="1041.0" y="222.0" width="8" height="1.6" fill="#d3d3d3"/><rect x="1066.4" y="222.0" width="8" height="1.6" fill="#d3d3d3"/><rect x="1091.8" y="222.0" width="8" height="1.6" fill="#d3d3d3"/><rect x="1117.2" y="222.0" width="8" height="1.6" fill="#d3d3d3"/><rect x="1142.6" y="222.0" width="8" height="1.6" fill="#d3d3d3"/><rect x="1168.0" y="222.0" width="8" height="1.6" fill="#d3d3d3"/><text x="1106" y="147.5" text-anchor="middle" font-family="Liberation Sans" font-size="6" fill="#999">Chart Title</text><rect x="1070" y="231.5" width="3" height="3" fill="#9db3df"/><rect x="1074" y="232" width="16" height="2" fill="#c8c8c8"/><rect x="1095" y="231.5" width="3" height="3" fill="#f4b183"/><rect x="1099" y="232" width="16" height="2" fill="#c8c8c8"/><rect x="1120" y="231.5" width="3" height="3" fill="#c9c9c9"/><rect x="1124" y="232" width="16" height="2" fill="#c8c8c8"/></svg>
<svg style="left:0;top:0" width="2004" height="270">
<path d="M1250.0 156 V214 L1246.0 218" stroke="#e3e3e3" stroke-width="0.8" fill="none"/><path d="M1275.4 156 V214 L1271.4 218" stroke="#e3e3e3" stroke-width="0.8" fill="none"/><path d="M1300.8 156 V214 L1296.8 218" stroke="#e3e3e3" stroke-width="0.8" fill="none"/><path d="M1326.2 156 V214 L1322.2 218" stroke="#e3e3e3" stroke-width="0.8" fill="none"/><path d="M1351.6 156 V214 L1347.6 218" stroke="#e3e3e3" stroke-width="0.8" fill="none"/><path d="M1377.0 156 V214 L1373.0 218" stroke="#e3e3e3" stroke-width="0.8" fill="none"/><rect x="1248" y="163.7" width="17.799999999999955" height="5.900000000000006" fill="#4472c4"/><rect x="1265.8" y="163.7" width="34.799999999999955" height="5.900000000000006" fill="#ed7d31"/><rect x="1300.6" y="163.7" width="15.300000000000182" height="5.900000000000006" fill="#a5a5a5"/><path d="M1315.9 163.7 l1.5 -1.2 v5.900000000000006 l-1.5 1.2 Z" fill="#555"/><rect x="1248" y="178" width="39" height="6" fill="#4472c4"/><rect x="1287" y="178" width="22.5" height="6" fill="#ed7d31"/><rect x="1309.5" y="178" width="28.40000000000009" height="6" fill="#a5a5a5"/><path d="M1337.9 178 l1.5 -1.2 v6 l-1.5 1.2 Z" fill="#555"/><rect x="1248" y="192" width="39" height="6" fill="#4472c4"/><rect x="1287" y="192" width="44.59999999999991" height="6" fill="#ed7d31"/><rect x="1331.6" y="192" width="22.40000000000009" height="6" fill="#a5a5a5"/><path d="M1354 192 l1.5 -1.2 v6 l-1.5 1.2 Z" fill="#555"/><rect x="1248" y="206.5" width="17" height="6.0" fill="#4472c4"/><rect x="1265" y="206.5" width="32.59999999999991" height="6.0" fill="#ed7d31"/><rect x="1297.6" y="206.5" width="12.800000000000182" height="6.0" fill="#a5a5a5"/><path d="M1310.4 206.5 l1.5 -1.2 v6.0 l-1.5 1.2 Z" fill="#555"/><rect x="1228" y="165.84999999999997" width="12" height="1.6" fill="#cfcfcf"/><rect x="1228" y="180.2" width="12" height="1.6" fill="#cfcfcf"/><rect x="1228" y="194.2" width="12" height="1.6" fill="#cfcfcf"/><rect x="1228" y="208.7" width="12" height="1.6" fill="#cfcfcf"/><rect x="1241.0" y="222.0" width="8" height="1.6" fill="#d3d3d3"/><rect x="1266.4" y="222.0" width="8" height="1.6" fill="#d3d3d3"/><rect x="1291.8" y="222.0" width="8" height="1.6" fill="#d3d3d3"/><rect x="1317.2" y="222.0" width="8" height="1.6" fill="#d3d3d3"/><rect x="1342.6" y="222.0" width="8" height="1.6" fill="#d3d3d3"/><rect x="1368.0" y="222.0" width="8" height="1.6" fill="#d3d3d3"/><text x="1306" y="148.5" text-anchor="middle" font-family="Liberation Sans" font-size="6.5" font-weight="bold" fill="#1f3864">Chart Title</text><rect x="1270" y="231.5" width="3" height="3" fill="#4472c4"/><rect x="1274" y="232" width="16" height="2" fill="#c8c8c8"/><rect x="1295" y="231.5" width="3" height="3" fill="#ed7d31"/><rect x="1299" y="232" width="16" height="2" fill="#c8c8c8"/><rect x="1320" y="231.5" width="3" height="3" fill="#a5a5a5"/><rect x="1324" y="232" width="16" height="2" fill="#c8c8c8"/></svg>

<!-- formula bar -->
<div class="a" style="left:0;top:270px;width:2004px;height:52.5px;background:#fff"></div>
<div class="a" style="left:1968px;top:270px;width:36px;height:52.5px;background:#f7f7f7"></div>
<div class="a" style="left:166.5px;top:270px;width:3.5px;height:52.5px;background:#c4c4c4"></div>
<div class="a" style="left:0;top:322px;width:2004px;height:6px;background:linear-gradient(#a9a9a9 0,#a9a9a9 1.2px,#e2e2e2 1.2px,#e4e4e4 4.5px,#b9b9b9 4.5px)"></div>
<div class="t" style="left:18px;top:283.5px;font-size:25.6px;color:#222;font-weight:normal;;-webkit-text-stroke:0.35px #222">Chart 1</div>

<svg style="left:0;top:0" width="2004" height="330">
 <path d="M144 289.5 L151 280 L158 289.5 Z M144 302 L151 312.5 L158 302 Z" fill="#555"/>
 <path d="M199.5 287.5 L218.5 306 M218.5 287.5 L199.5 306" stroke="#c6c6c6" stroke-width="3.2" stroke-linecap="round"/>
 <path d="M256 297 L264 305.5 L280.5 288" stroke="#c6c6c6" stroke-width="3.4" fill="none" stroke-linecap="round" stroke-linejoin="round"/>
 <rect x="358" y="282.5" width="1.5" height="28.5" fill="#dadada"/>
 <path d="M1990 291.5 H2004 L1997 301.5 Z" fill="#555"/>
</svg>
<div class="t" style="left:314px;top:279px;font-size:31px;font-family:'Liberation Serif',serif;font-style:italic;color:#bdbdbd">fx</div>
<div class="t" style="left:373.5px;top:284.5px;font-size:25px;color:#111;-webkit-text-stroke:0.25px #111;transform:scaleX(0.9987);transform-origin:0 0;letter-spacing:-0.15px">=SERIES(Sheet1!$A$2,Sheet1!$B$1:$E$1,Sheet1!$B$2:$E$2,1)</div>
<div class="a" style="left:44px;top:372px;width:1960px;height:1276px;background:repeating-linear-gradient(to bottom,transparent 0,transparent 30.4px,#d3d3d3 30.4px,#d3d3d3 32px)"></div>
<div class="a" style="left:171.75px;top:372px;width:1.5px;height:1276px;background:#d6d6d6"></div>
<div class="a" style="left:302.25px;top:372px;width:1.5px;height:1276px;background:#d6d6d6"></div>
<div class="a" style="left:432.25px;top:372px;width:1.5px;height:1276px;background:#d6d6d6"></div>
<div class="a" style="left:562.25px;top:372px;width:1.5px;height:1276px;background:#d6d6d6"></div>
<div class="a" style="left:692.25px;top:372px;width:1.5px;height:1276px;background:#d6d6d6"></div>
<div class="a" style="left:822.25px;top:372px;width:1.5px;height:1276px;background:#d6d6d6"></div>
<div class="a" style="left:952.25px;top:372px;width:1.5px;height:1276px;background:#d6d6d6"></div>
<div class="a" style="left:1082.25px;top:372px;width:1.5px;height:1276px;background:#d6d6d6"></div>
<div class="a" style="left:1212.25px;top:372px;width:1.5px;height:1276px;background:#d6d6d6"></div>
<div class="a" style="left:1342.25px;top:372px;width:1.5px;height:1276px;background:#d6d6d6"></div>

<div class="a" style="left:42.5px;top:368.5px;width:1260.5px;height:698.5px;background:#fff"></div>
<svg style="left:0;top:0" width="2004" height="1100">
 <!-- selection frame -->
 <path d="M42.5 368.5 H1303 V1067 H42.5 Z" fill="none" stroke="#a8a8a8" stroke-width="1.6"/>
 <path d="M51 377 H1294.5 V1058.5 H51 Z" fill="none" stroke="#b4b4b4" stroke-width="1.6"/>
 <path d="M202.5 453.5 V931 L161.5 962.5" fill="none" stroke="#d9d9d9" stroke-width="1.6"/>
 <path d="M407.8 453.5 V931 L366.8 962.5" fill="none" stroke="#d9d9d9" stroke-width="1.6"/>
 <path d="M613.1 453.5 V931 L572.1 962.5" fill="none" stroke="#d9d9d9" stroke-width="1.6"/>
 <path d="M818.4 453.5 V931 L777.4 962.5" fill="none" stroke="#d9d9d9" stroke-width="1.6"/>
 <path d="M1023.7 453.5 V931 L982.7 962.5" fill="none" stroke="#d9d9d9" stroke-width="1.6"/>
 <path d="M1229.0 453.5 V931 L1188.0 962.5" fill="none" stroke="#d9d9d9" stroke-width="1.6"/>
 <rect x="174.5" y="511" width="149.5" height="48.0" fill="#00b0f0"/>
 <path d="M174.5 511 L190.5 499 H340 L324 511 Z" fill="#0089bd"/>
 <rect x="324" y="511" width="278.0" height="48.0" fill="#ed7d31"/>
 <path d="M324 511 L340 499 H618 L602 511 Z" fill="#b45f25"/>
 <rect x="602" y="511" width="114.0" height="48.0" fill="#a5a5a5"/>
 <path d="M602 511 L618 499 H732 L716 511 Z" fill="#7f7f7f"/>
 <path d="M716 511 L732 499 V547 L716 559 Z" fill="#6b6b6b"/>
 <rect x="174.5" y="630.5" width="318.0" height="47.5" fill="#00b0f0"/>
 <path d="M174.5 630.5 L190.5 618.5 H508.5 L492.5 630.5 Z" fill="#0089bd"/>
 <rect x="492.5" y="630.5" width="182.1" height="47.5" fill="#ed7d31"/>
 <path d="M492.5 630.5 L508.5 618.5 H690.6 L674.6 630.5 Z" fill="#b45f25"/>
 <rect x="674.6" y="630.5" width="218.4" height="47.5" fill="#a5a5a5"/>
 <path d="M674.6 630.5 L690.6 618.5 H909 L893 630.5 Z" fill="#7f7f7f"/>
 <path d="M893 630.5 L909 618.5 V666 L893 678 Z" fill="#6b6b6b"/>
 <rect x="174.5" y="750" width="313.5" height="47.4" fill="#00b0f0"/>
 <path d="M174.5 750 L190.5 738 H504 L488 750 Z" fill="#0089bd"/>
 <rect x="488" y="750" width="359.6" height="47.4" fill="#ed7d31"/>
 <path d="M488 750 L504 738 H863.6 L847.6 750 Z" fill="#b45f25"/>
 <rect x="847.6" y="750" width="179.4" height="47.4" fill="#a5a5a5"/>
 <path d="M847.6 750 L863.6 738 H1043 L1027 750 Z" fill="#7f7f7f"/>
 <path d="M1027 750 L1043 738 V785.4 L1027 797.4 Z" fill="#6b6b6b"/>
 <rect x="174.5" y="868.8" width="141.2" height="47.5" fill="#00b0f0"/>
 <path d="M174.5 868.8 L190.5 856.8 H331.7 L315.7 868.8 Z" fill="#0089bd"/>
 <rect x="315.7" y="868.8" width="264.0" height="47.5" fill="#ed7d31"/>
 <path d="M315.7 868.8 L331.7 856.8 H595.7 L579.7 868.8 Z" fill="#b45f25"/>
 <rect x="579.7" y="868.8" width="91.3" height="47.5" fill="#a5a5a5"/>
 <path d="M579.7 868.8 L595.7 856.8 H687 L671 868.8 Z" fill="#7f7f7f"/>
 <path d="M671 868.8 L687 856.8 V904.3 L671 916.3 Z" fill="#6b6b6b"/>
 <circle cx="174.5" cy="511" r="5.6" fill="#d5e5f7" stroke="#1a6fd0" stroke-width="2"/>
 <circle cx="174.5" cy="559" r="5.6" fill="#d5e5f7" stroke="#1a6fd0" stroke-width="2"/>
 <circle cx="324" cy="559" r="5.6" fill="#d5e5f7" stroke="#1a6fd0" stroke-width="2"/>
 <circle cx="190.5" cy="499" r="5.6" fill="#d5e5f7" stroke="#1a6fd0" stroke-width="2"/>
 <circle cx="340" cy="499" r="5.6" fill="#d5e5f7" stroke="#1a6fd0" stroke-width="2"/>
 <circle cx="340" cy="547" r="5.6" fill="#d5e5f7" stroke="#1a6fd0" stroke-width="2"/>
 <circle cx="174.5" cy="630.5" r="5.6" fill="#d5e5f7" stroke="#1a6fd0" stroke-width="2"/>
 <circle cx="174.5" cy="678" r="5.6" fill="#d5e5f7" stroke="#1a6fd0" stroke-width="2"/>
 <circle cx="492.5" cy="678" r="5.6" fill="#d5e5f7" stroke="#1a6fd0" stroke-width="2"/>
 <circle cx="190.5" cy="618.5" r="5.6" fill="#d5e5f7" stroke="#1a6fd0" stroke-width="2"/>
 <circle cx="508.5" cy="618.5" r="5.6" fill="#d5e5f7" stroke="#1a6fd0" stroke-width="2"/>
 <circle cx="508.5" cy="666" r="5.6" fill="#d5e5f7" stroke="#1a6fd0" stroke-width="2"/>
 <circle cx="174.5" cy="750" r="5.6" fill="#d5e5f7" stroke="#1a6fd0" stroke-width="2"/>
 <circle cx="174.5" cy="797.4" r="5.6" fill="#d5e5f7" stroke="#1a6fd0" stroke-width="2"/>
 <circle cx="488" cy="797.4" r="5.6" fill="#d5e5f7" stroke="#1a6fd0" stroke-width="2"/>
 <circle cx="190.5" cy="738" r="5.6" fill="#d5e5f7" stroke="#1a6fd0" stroke-width="2"/>
 <circle cx="504" cy="738" r="5.6" fill="#d5e5f7" stroke="#1a6fd0" stroke-width="2"/>
 <circle cx="504" cy="785.4" r="5.6" fill="#d5e5f7" stroke="#1a6fd0" stroke-width="2"/>
 <circle cx="174.5" cy="868.8" r="5.6" fill="#d5e5f7" stroke="#1a6fd0" stroke-width="2"/>
 <circle cx="174.5" cy="916.3" r="5.6" fill="#d5e5f7" stroke="#1a6fd0" stroke-width="2"/>
 <circle cx="315.7" cy="916.3" r="5.6" fill="#d5e5f7" stroke="#1a6fd0" stroke-width="2"/>
 <circle cx="190.5" cy="856.8" r="5.6" fill="#d5e5f7" stroke="#1a6fd0" stroke-width="2"/>
 <circle cx="331.7" cy="856.8" r="5.6" fill="#d5e5f7" stroke="#1a6fd0" stroke-width="2"/>
 <circle cx="331.7" cy="904.3" r="5.6" fill="#d5e5f7" stroke="#1a6fd0" stroke-width="2"/>
</svg>
<div class="t" style="left:470.5px;width:400px;text-align:center;top:394px;font-size:25.6px;color:#595959">Chart Title</div>
<div class="t" style="left:0;width:146px;text-align:right;top:538.5px;font-size:17.8px;color:#595959">Month 4</div>
<div class="t" style="left:0;width:146px;text-align:right;top:657.5px;font-size:17.8px;color:#595959">Month 3</div>
<div class="t" style="left:0;width:146px;text-align:right;top:776.5px;font-size:17.8px;color:#595959">Month2</div>
<div class="t" style="left:0;width:146px;text-align:right;top:895.5px;font-size:17.8px;color:#595959">Month 1</div>
<div class="t" style="left:-38.5px;width:400px;text-align:center;top:978px;font-size:16.3px;color:#595959">0</div>
<div class="t" style="left:166.8px;width:400px;text-align:center;top:978px;font-size:16.3px;color:#595959">500</div>
<div class="t" style="left:372.1px;width:400px;text-align:center;top:978px;font-size:16.3px;color:#595959">1000</div>
<div class="t" style="left:577.4000000000001px;width:400px;text-align:center;top:978px;font-size:16.3px;color:#595959">1500</div>
<div class="t" style="left:782.7px;width:400px;text-align:center;top:978px;font-size:16.3px;color:#595959">2000</div>
<div class="t" style="left:988.0px;width:400px;text-align:center;top:978px;font-size:16.3px;color:#595959">2500</div>
<svg style="left:0;top:0" width="2004" height="1100"><rect x="528" y="1023" width="10" height="10" fill="#00b0f0"/><rect x="632" y="1023" width="10" height="10" fill="#ed7d31"/><rect x="736" y="1023" width="10" height="10" fill="#a5a5a5"/></svg>
<div class="t" style="left:542px;top:1020px;font-size:16.4px;color:#595959">Product 1</div>
<div class="t" style="left:646px;top:1020px;font-size:16.4px;color:#595959">Product 2</div>
<div class="t" style="left:750px;top:1020px;font-size:16.4px;color:#595959">Product 3</div>
<div class="a" style="left:39.25px;top:365.25px;width:15px;height:15px;border-radius:2px;background:#fff;border:1px solid #8a8a8a;box-shadow:1px 2px 4px rgba(0,0,0,.18)"></div>
<div class="a" style="left:39.25px;top:709.4px;width:15px;height:15px;border-radius:2px;background:#fff;border:1px solid #8a8a8a;box-shadow:1px 2px 4px rgba(0,0,0,.18)"></div>
<div class="a" style="left:39.25px;top:1055.4px;width:15px;height:15px;border-radius:2px;background:#fff;border:1px solid #8a8a8a;box-shadow:1px 2px 4px rgba(0,0,0,.18)"></div>
<div class="a" style="left:663.35px;top:365.25px;width:15px;height:15px;border-radius:2px;background:#fff;border:1px solid #8a8a8a;box-shadow:1px 2px 4px rgba(0,0,0,.18)"></div>
<div class="a" style="left:663.35px;top:1055.4px;width:15px;height:15px;border-radius:2px;background:#fff;border:1px solid #8a8a8a;box-shadow:1px 2px 4px rgba(0,0,0,.18)"></div>
<div class="a" style="left:1291.5px;top:365.25px;width:15px;height:15px;border-radius:2px;background:#fff;border:1px solid #8a8a8a;box-shadow:1px 2px 4px rgba(0,0,0,.18)"></div>
<div class="a" style="left:1291.5px;top:709.4px;width:15px;height:15px;border-radius:2px;background:#fff;border:1px solid #8a8a8a;box-shadow:1px 2px 4px rgba(0,0,0,.18)"></div>
<div class="a" style="left:1291.5px;top:1055.4px;width:15px;height:15px;border-radius:2px;background:#fff;border:1px solid #8a8a8a;box-shadow:1px 2px 4px rgba(0,0,0,.18)"></div>
<div class="a" style="left:0;top:328px;width:2004px;height:42.5px;background:linear-gradient(#fcfcfc,#f6f6f6)"></div>
<div class="a" style="left:0;top:370.2px;width:2004px;height:1.8px;background:#c3c3c3"></div>
<svg style="left:0;top:0" width="50" height="372"><path d="M38 336 V366 H9 Z" fill="#dcdcdc"/></svg>
<div class="a" style="left:0;top:372px;width:42px;height:1276px;background:#f7f7f7"></div>
<div class="a" style="left:42px;top:328px;width:2px;height:1320px;background:#c3c3c3"></div>
<div class="a" style="left:171.75px;top:328px;width:1.5px;height:42px;background:#dedede"></div>
<div class="a" style="left:302.25px;top:328px;width:1.5px;height:42px;background:#dedede"></div>
<div class="a" style="left:432.25px;top:328px;width:1.5px;height:42px;background:#dedede"></div>
<div class="a" style="left:562.25px;top:328px;width:1.5px;height:42px;background:#dedede"></div>
<div class="a" style="left:692.25px;top:328px;width:1.5px;height:42px;background:#dedede"></div>
<div class="a" style="left:822.25px;top:328px;width:1.5px;height:42px;background:#dedede"></div>
<div class="a" style="left:952.25px;top:328px;width:1.5px;height:42px;background:#dedede"></div>
<div class="a" style="left:1082.25px;top:328px;width:1.5px;height:42px;background:#dedede"></div>
<div class="a" style="left:1212.25px;top:328px;width:1.5px;height:42px;background:#dedede"></div>
<div class="a" style="left:1342.25px;top:328px;width:1.5px;height:42px;background:#dedede"></div>
<div class="t" style="left:67.75px;width:80px;text-align:center;top:341px;font-size:20.5px;color:#444;-webkit-text-stroke:0.25px #444">A</div>
<div class="t" style="left:197.75px;width:80px;text-align:center;top:341px;font-size:20.5px;color:#444;-webkit-text-stroke:0.25px #444">B</div>
<div class="t" style="left:328.0px;width:80px;text-align:center;top:341px;font-size:20.5px;color:#444;-webkit-text-stroke:0.25px #444">C</div>
<div class="t" style="left:458.0px;width:80px;text-align:center;top:341px;font-size:20.5px;color:#444;-webkit-text-stroke:0.25px #444">D</div>
<div class="t" style="left:588.0px;width:80px;text-align:center;top:341px;font-size:20.5px;color:#444;-webkit-text-stroke:0.25px #444">E</div>
<div class="t" style="left:718.0px;width:80px;text-align:center;top:341px;font-size:20.5px;color:#444;-webkit-text-stroke:0.25px #444">F</div>
<div class="t" style="left:848.0px;width:80px;text-align:center;top:341px;font-size:20.5px;color:#444;-webkit-text-stroke:0.25px #444">G</div>
<div class="t" style="left:978.0px;width:80px;text-align:center;top:341px;font-size:20.5px;color:#444;-webkit-text-stroke:0.25px #444">H</div>
<div class="t" style="left:1108.0px;width:80px;text-align:center;top:341px;font-size:20.5px;color:#444;-webkit-text-stroke:0.25px #444">I</div>
<div class="t" style="left:1238.0px;width:80px;text-align:center;top:341px;font-size:20.5px;color:#444;-webkit-text-stroke:0.25px #444">J</div>
<div class="t" style="left:1368.0px;width:80px;text-align:center;top:341px;font-size:20.5px;color:#444;-webkit-text-stroke:0.25px #444">K</div>
<div class="a" style="left:0;top:372px;width:42px;height:1276px;background:repeating-linear-gradient(to bottom,transparent 0,transparent 30.6px,#dedede 30.6px,#dedede 32px)"></div>
<div class="t" style="left:0;width:42px;text-align:center;top:378.4px;font-size:22px;color:#444;letter-spacing:-0.5px;text-indent:-0.5px;-webkit-text-stroke:0.3px #444">1</div>
<div class="t" style="left:0;width:42px;text-align:center;top:410.4px;font-size:22px;color:#444;letter-spacing:-0.5px;text-indent:-0.5px;-webkit-text-stroke:0.3px #444">2</div>
<div class="t" style="left:0;width:42px;text-align:center;top:442.4px;font-size:22px;color:#444;letter-spacing:-0.5px;text-indent:-0.5px;-webkit-text-stroke:0.3px #444">3</div>
<div class="t" style="left:0;width:42px;text-align:center;top:474.4px;font-size:22px;color:#444;letter-spacing:-0.5px;text-indent:-0.5px;-webkit-text-stroke:0.3px #444">4</div>
<div class="t" style="left:0;width:42px;text-align:center;top:506.4px;font-size:22px;color:#444;letter-spacing:-0.5px;text-indent:-0.5px;-webkit-text-stroke:0.3px #444">5</div>
<div class="t" style="left:0;width:42px;text-align:center;top:538.4px;font-size:22px;color:#444;letter-spacing:-0.5px;text-indent:-0.5px;-webkit-text-stroke:0.3px #444">6</div>
<div class="t" style="left:0;width:42px;text-align:center;top:570.4px;font-size:22px;color:#444;letter-spacing:-0.5px;text-indent:-0.5px;-webkit-text-stroke:0.3px #444">7</div>
<div class="t" style="left:0;width:42px;text-align:center;top:602.4px;font-size:22px;color:#444;letter-spacing:-0.5px;text-indent:-0.5px;-webkit-text-stroke:0.3px #444">8</div>
<div class="t" style="left:0;width:42px;text-align:center;top:634.4px;font-size:22px;color:#444;letter-spacing:-0.5px;text-indent:-0.5px;-webkit-text-stroke:0.3px #444">9</div>
<div class="t" style="left:0;width:42px;text-align:center;top:666.4px;font-size:22px;color:#444;letter-spacing:-0.5px;text-indent:-0.5px;-webkit-text-stroke:0.3px #444">10</div>
<div class="t" style="left:0;width:42px;text-align:center;top:698.4px;font-size:22px;color:#444;letter-spacing:-0.5px;text-indent:-0.5px;-webkit-text-stroke:0.3px #444">11</div>
<div class="t" style="left:0;width:42px;text-align:center;top:730.4px;font-size:22px;color:#444;letter-spacing:-0.5px;text-indent:-0.5px;-webkit-text-stroke:0.3px #444">12</div>
<div class="t" style="left:0;width:42px;text-align:center;top:762.4px;font-size:22px;color:#444;letter-spacing:-0.5px;text-indent:-0.5px;-webkit-text-stroke:0.3px #444">13</div>
<div class="t" style="left:0;width:42px;text-align:center;top:794.4px;font-size:22px;color:#444;letter-spacing:-0.5px;text-indent:-0.5px;-webkit-text-stroke:0.3px #444">14</div>
<div class="t" style="left:0;width:42px;text-align:center;top:826.4px;font-size:22px;color:#444;letter-spacing:-0.5px;text-indent:-0.5px;-webkit-text-stroke:0.3px #444">15</div>
<div class="t" style="left:0;width:42px;text-align:center;top:858.4px;font-size:22px;color:#444;letter-spacing:-0.5px;text-indent:-0.5px;-webkit-text-stroke:0.3px #444">16</div>
<div class="t" style="left:0;width:42px;text-align:center;top:890.4px;font-size:22px;color:#444;letter-spacing:-0.5px;text-indent:-0.5px;-webkit-text-stroke:0.3px #444">17</div>
<div class="t" style="left:0;width:42px;text-align:center;top:922.4px;font-size:22px;color:#444;letter-spacing:-0.5px;text-indent:-0.5px;-webkit-text-stroke:0.3px #444">18</div>
<div class="t" style="left:0;width:42px;text-align:center;top:954.4px;font-size:22px;color:#444;letter-spacing:-0.5px;text-indent:-0.5px;-webkit-text-stroke:0.3px #444">19</div>
<div class="t" style="left:0;width:42px;text-align:center;top:986.4px;font-size:22px;color:#444;letter-spacing:-0.5px;text-indent:-0.5px;-webkit-text-stroke:0.3px #444">20</div>
<div class="t" style="left:0;width:42px;text-align:center;top:1018.4px;font-size:22px;color:#444;letter-spacing:-0.5px;text-indent:-0.5px;-webkit-text-stroke:0.3px #444">21</div>
<div class="t" style="left:0;width:42px;text-align:center;top:1050.4px;font-size:22px;color:#444;letter-spacing:-0.5px;text-indent:-0.5px;-webkit-text-stroke:0.3px #444">22</div>
<div class="t" style="left:0;width:42px;text-align:center;top:1082.4px;font-size:22px;color:#444;letter-spacing:-0.5px;text-indent:-0.5px;-webkit-text-stroke:0.3px #444">23</div>
<div class="t" style="left:0;width:42px;text-align:center;top:1114.4px;font-size:22px;color:#444;letter-spacing:-0.5px;text-indent:-0.5px;-webkit-text-stroke:0.3px #444">24</div>
<div class="t" style="left:0;width:42px;text-align:center;top:1146.4px;font-size:22px;color:#444;letter-spacing:-0.5px;text-indent:-0.5px;-webkit-text-stroke:0.3px #444">25</div>
<div class="t" style="left:0;width:42px;text-align:center;top:1178.4px;font-size:22px;color:#444;letter-spacing:-0.5px;text-indent:-0.5px;-webkit-text-stroke:0.3px #444">26</div>
<div class="t" style="left:0;width:42px;text-align:center;top:1210.4px;font-size:22px;color:#444;letter-spacing:-0.5px;text-indent:-0.5px;-webkit-text-stroke:0.3px #444">27</div>
<div class="t" style="left:0;width:42px;text-align:center;top:1242.4px;font-size:22px;color:#444;letter-spacing:-0.5px;text-indent:-0.5px;-webkit-text-stroke:0.3px #444">28</div>
<div class="t" style="left:0;width:42px;text-align:center;top:1274.4px;font-size:22px;color:#444;letter-spacing:-0.5px;text-indent:-0.5px;-webkit-text-stroke:0.3px #444">29</div>
<div class="t" style="left:0;width:42px;text-align:center;top:1306.4px;font-size:22px;color:#444;letter-spacing:-0.5px;text-indent:-0.5px;-webkit-text-stroke:0.3px #444">30</div>
<div class="t" style="left:0;width:42px;text-align:center;top:1338.4px;font-size:22px;color:#444;letter-spacing:-0.5px;text-indent:-0.5px;-webkit-text-stroke:0.3px #444">31</div>
<div class="t" style="left:0;width:42px;text-align:center;top:1370.4px;font-size:22px;color:#444;letter-spacing:-0.5px;text-indent:-0.5px;-webkit-text-stroke:0.3px #444">32</div>
<div class="t" style="left:0;width:42px;text-align:center;top:1402.4px;font-size:22px;color:#444;letter-spacing:-0.5px;text-indent:-0.5px;-webkit-text-stroke:0.3px #444">33</div>
<div class="t" style="left:0;width:42px;text-align:center;top:1434.4px;font-size:22px;color:#444;letter-spacing:-0.5px;text-indent:-0.5px;-webkit-text-stroke:0.3px #444">34</div>
<div class="t" style="left:0;width:42px;text-align:center;top:1466.4px;font-size:22px;color:#444;letter-spacing:-0.5px;text-indent:-0.5px;-webkit-text-stroke:0.3px #444">35</div>
<div class="t" style="left:0;width:42px;text-align:center;top:1498.4px;font-size:22px;color:#444;letter-spacing:-0.5px;text-indent:-0.5px;-webkit-text-stroke:0.3px #444">36</div>
<div class="t" style="left:0;width:42px;text-align:center;top:1530.4px;font-size:22px;color:#444;letter-spacing:-0.5px;text-indent:-0.5px;-webkit-text-stroke:0.3px #444">37</div>
<div class="t" style="left:0;width:42px;text-align:center;top:1562.4px;font-size:22px;color:#444;letter-spacing:-0.5px;text-indent:-0.5px;-webkit-text-stroke:0.3px #444">38</div>
<div class="t" style="left:0;width:42px;text-align:center;top:1594.4px;font-size:22px;color:#444;letter-spacing:-0.5px;text-indent:-0.5px;-webkit-text-stroke:0.3px #444">39</div>
<div class="t" style="left:0;width:42px;text-align:center;top:1626.4px;font-size:22px;color:#444;letter-spacing:-0.5px;text-indent:-0.5px;-webkit-text-stroke:0.3px #444">40</div>

<div class="a" style="left:1406px;top:324.5px;width:598px;height:1376.5px;background:#ebebeb"></div>
<!-- tabs area selected -->
<div class="a" style="left:1437px;top:410px;width:78px;height:74px;background:linear-gradient(#f7f7f7,#f1f1f1);border-right:1.5px solid #d4d4d4"></div>
<div class="a" style="left:1411px;top:484px;width:584px;height:2px;background:#d2d2d2"></div>
<div class="a" style="left:1411px;top:486px;width:584px;height:11px;background:#f3f3f3"></div>
<div class="a" style="left:1411px;top:496.5px;width:584px;height:2px;background:#cfcfcf"></div>
<div class="a" style="left:1411px;top:498.5px;width:584px;height:48px;background:linear-gradient(#ececec,#e2e2e2)"></div>
<div class="a" style="left:1411px;top:546px;width:584px;height:2px;background:#cdcdcd"></div>
<div class="a" style="left:1448px;top:845px;width:462px;height:2px;background:#d6d6d6"></div>
<div class="a" style="left:1411px;top:986px;width:584px;height:2px;background:#d0d0d0"></div>
<div class="a" style="left:1411px;top:988px;width:584px;height:49px;background:linear-gradient(#f2f2f2,#ededed)"></div>
<div class="a" style="left:1411px;top:1036.5px;width:584px;height:2px;background:#d3d3d3"></div>
<div class="t" style="left:1448px;top:340.2px;font-size:30.8px;color:#222;font-weight:normal;-webkit-text-stroke:0.6px #222">Format Data Series</div>

<svg style="left:0;top:0" width="2004" height="1100">
 <circle cx="1981" cy="355" r="12.5" fill="#6b6b6b"/>
 <path d="M1975.5 349.5 L1986.5 360.5 M1986.5 349.5 L1975.5 360.5" stroke="#fff" stroke-width="2.6" stroke-linecap="round"/>
 <!-- paint bucket -->
 <path d="M1472.8 437 L1456.9 452.6 L1471.8 467.4 L1489.2 450.6 L1478 439 Z" fill="#fafafa"/>
 <path d="M1472.8 437 L1456.9 452.6 L1471.8 467.4 L1489.2 450.6 L1482.5 444" fill="none" stroke="#333" stroke-width="2"/>
 <path d="M1472.8 437 V434.2 A3.1 3.1 0 0 1 1479 434.2 V449.5" fill="none" stroke="#333" stroke-width="2"/>
 <path d="M1482.5 443.5 C1486 440 1493 439.5 1495.5 446 C1498 452 1497 462 1494.5 469.5 C1493.5 460 1492.5 453 1489.2 450.6 Z" fill="#7ab6ea" stroke="#1262c0" stroke-width="1.7"/>
 <!-- pentagon -->
 <path d="M1560 429 L1578.5 443.5 L1571 465 H1549 L1541.5 443.5 Z" fill="#fafafa" stroke="#333" stroke-width="2.2" stroke-linejoin="miter"/>
 <path d="M1548 471 L1550.5 465.5 H1569.5 L1572 471 Z" fill="#fafafa" stroke="#a0a0a0" stroke-width="1.5"/>
 <!-- bar icon -->
 <rect x="1625" y="446" width="12.5" height="25" fill="#c6c6c6" stroke="#888" stroke-width="2"/>
 <rect x="1637.5" y="428.5" width="12.5" height="42.5" fill="#fafafa" stroke="#333" stroke-width="2"/>
 <rect x="1650" y="436.5" width="11.5" height="34.5" fill="#7db9ec" stroke="#1565c0" stroke-width="2"/>
 <!-- fill chevron -->
 <path d="M1430 518 L1437 526 L1444 518" fill="none" stroke="#777" stroke-width="2.4" stroke-linecap="round" stroke-linejoin="round"/>
 <!-- border chevron -->
 <path d="M1435 1004.5 L1443 1012 L1435 1019.5" fill="none" stroke="#777" stroke-width="2.4" stroke-linecap="round" stroke-linejoin="round"/>
 <circle cx="1460" cy="581.7" r="13.2" fill="#fdfdfd" stroke="#c2c2c2" stroke-width="1.2"/>
 <defs><linearGradient id="rg" x1="0" y1="0" x2="0" y2="1"><stop offset="0" stop-color="#2f9260"/><stop offset="1" stop-color="#167a45"/></linearGradient></defs>
 <circle cx="1460" cy="619.7" r="13.6" fill="url(#rg)"/>
 <circle cx="1460" cy="619.7" r="6.2" fill="#fff"/>
 <circle cx="1460" cy="657.7" r="13.2" fill="#fdfdfd" stroke="#c2c2c2" stroke-width="1.2"/>
 <circle cx="1460" cy="695.7" r="13.2" fill="#fdfdfd" stroke="#c2c2c2" stroke-width="1.2"/>
 <circle cx="1460" cy="733.7" r="13.2" fill="#fdfdfd" stroke="#c2c2c2" stroke-width="1.2"/>
 <circle cx="1460" cy="771.7" r="13.2" fill="#fdfdfd" stroke="#c2c2c2" stroke-width="1.2"/>
 <rect x="1448.8" y="803.3" width="26.5" height="27" rx="4.5" fill="#fdfdfd" stroke="#c4c4c4" stroke-width="1.2"/>
</svg>
<div class="t" style="left:1457px;top:509.5px;font-size:24.6px;color:#222;font-weight:normal;;-webkit-text-stroke:0.35px #222">Fill</div>
<div class="t" style="left:1486px;top:570.2px;font-size:25.5px;color:#222;font-weight:normal;letter-spacing:0.18px;-webkit-text-stroke:0.35px #222">No fill</div>
<div class="t" style="left:1486px;top:608.2px;font-size:25.5px;color:#222;font-weight:normal;letter-spacing:0.18px;-webkit-text-stroke:0.35px #222">Solid fill</div>
<div class="t" style="left:1486px;top:646.2px;font-size:25.5px;color:#222;font-weight:normal;letter-spacing:0.18px;-webkit-text-stroke:0.35px #222">Gradient fill</div>
<div class="t" style="left:1486px;top:684.2px;font-size:25.5px;color:#222;font-weight:normal;letter-spacing:0.18px;-webkit-text-stroke:0.35px #222">Picture or texture fill</div>
<div class="t" style="left:1486px;top:722.2px;font-size:25.5px;color:#222;font-weight:normal;letter-spacing:0.18px;-webkit-text-stroke:0.35px #222">Pattern fill</div>
<div class="t" style="left:1486px;top:760.2px;font-size:25.5px;color:#222;font-weight:normal;letter-spacing:0.18px;-webkit-text-stroke:0.35px #222">Automatic</div>
<div class="t" style="left:1487.5px;top:809.5px;font-size:25.5px;color:#222;font-weight:normal;letter-spacing:0.1px;-webkit-text-stroke:0.35px #222">Invert if negative</div>
<div class="t" style="left:1447.5px;top:867px;font-size:25px;color:#222;font-weight:normal;;-webkit-text-stroke:0.35px #222">Color</div>
<div class="t" style="left:1447.5px;top:927px;font-size:25px;color:#222;font-weight:normal;;-webkit-text-stroke:0.35px #222">Transparency</div>
<div class="t" style="left:1455px;top:998.5px;font-size:26.6px;color:#222;font-weight:normal;;-webkit-text-stroke:0.35px #222">Border</div>

<div class="a" style="left:1903px;top:859px;width:72px;height:46.5px;border-radius:5px;background:linear-gradient(#f9f9f9,#e9e9e9);border:1.2px solid #b9b9b9;box-shadow:0 0.5px 1px rgba(0,0,0,.15)"></div>
<svg style="left:0;top:0" width="2004" height="1000">
 <rect x="1914" y="891" width="36" height="9" rx="3" fill="#00b0f0"/>
 <path d="M1920 877.2 L1930.7 866.6 L1940 878.6 L1930.2 887.7 Z" fill="#f7f7f7" stroke="#333" stroke-width="1.2"/>
 <path d="M1926.3 871 L1936.8 880.6" stroke="#4a90e2" stroke-width="2.2"/>
 <path d="M1935.2 872.6 V865.5 A2.1 2.1 0 0 0 1931.2 865 L1932 867" fill="none" stroke="#333" stroke-width="1.4"/>
 <path d="M1936.4 872.5 C1941 871.5 1943.5 875 1942.5 885" fill="none" stroke="#2a78d0" stroke-width="2.1"/>
 <path d="M1958 878 H1968 L1963 885 Z" fill="#555"/>
</svg>
<!-- slider -->
<div class="a" style="left:1625px;top:933px;width:213px;height:6px;border-radius:3px;background:#dcdcdc"></div>
<div class="a" style="left:1616px;top:923px;width:26.5px;height:26.5px;border-radius:50%;background:#fff;border:0.8px solid #cfcfcf;box-shadow:0 1px 2px rgba(0,0,0,.2)"></div>
<!-- spin box -->
<div class="a" style="left:1848.5px;top:918.5px;width:127px;height:47.5px;border-radius:6px;background:#fff;border:1.3px solid #bdbdbd;box-shadow:inset 0 1px 1px rgba(0,0,0,.05)"></div>
<svg style="left:0;top:0" width="2004" height="1000">
 <rect x="1946.5" y="924" width="1.2" height="36" fill="#e0e0e0"/>
 <rect x="1948" y="942.5" width="26" height="1" fill="#e6e6e6"/>
 <path d="M1956 936 L1961 928 L1966 936 Z M1956 950 L1961 958 L1966 950 Z" fill="#555"/>
</svg>
<div class="t" style="left:1861px;top:932px;font-size:21px;color:#111;font-weight:normal;;-webkit-text-stroke:0.35px #111">0%</div>

<div class="a" style="left:1406px;top:324.5px;width:594px;height:376px;border:0"></div>
<div class="a" style="left:1406px;top:324px;width:594px;height:5px;background:#fe2500"></div>
<div class="a" style="left:1406px;top:324.5px;width:5px;height:1376px;background:#fe2500"></div>
<div class="a" style="left:1995px;top:324.5px;width:5px;height:1376px;background:#fe2500"></div>
<div class="a" style="left:1406px;top:1695.5px;width:594px;height:5px;background:#fe2500"></div>
<div class="a" style="left:1435.2px;top:408.3px;width:86.8px;height:77.2px;border:4.6px solid #fe2500"></div>
<div class="a" style="left:1893px;top:846px;width:90px;height:67px;border:5px solid #fe2500"></div>

<div class="a" style="left:48px;top:1628px;width:1208px;height:14px;border-radius:7px;background:rgba(130,130,130,.7)"></div>
<div class="a" style="left:0;top:1648px;width:1406px;height:53px;background:linear-gradient(#f3f3f3,#eeeeee)"></div>
<div class="a" style="left:0;top:1647px;width:1406px;height:1.2px;background:#d6d6d6"></div>
<div class="a" style="left:120px;top:1647px;width:156.5px;height:46px;background:#fff;border-radius:0 0 5px 5px;box-shadow:0 1px 1.5px rgba(0,0,0,.28)"></div>
<div class="a" style="left:352.5px;top:1650px;width:1.5px;height:41px;background:#d0d0d0"></div>
<svg style="left:0;top:0" width="400" height="1746">
 <path d="M42 1665 L28 1675 L42 1685 Z" fill="#b8b8b8"/>
 <path d="M74 1665 L88 1675 L74 1685 Z" fill="#b8b8b8"/>
 <path d="M305.5 1673.4 H326.5 M316 1663.5 V1683.3" stroke="#555" stroke-width="3.2"/>
</svg>
<div class="t" style="left:159px;top:1660.5px;font-size:23.3px;color:#1e7a46;font-weight:bold;">Sheet1</div>

<div class="a" style="left:0;top:1701px;width:2004px;height:1.6px;background:#bcbcbc"></div>
<div class="a" style="left:0;top:1702.6px;width:2004px;height:43.4px;background:linear-gradient(#e5e5e5,#d8d8d8)"></div>
<div class="a" style="left:1374px;top:1702.6px;width:73px;height:43.4px;background:#acacac"></div>
<svg style="left:0;top:1690px" width="16" height="56"><path d="M0 56 V40 A16 16 0 0 0 16 56 Z" fill="#c9c9c9"/></svg>
<svg style="left:1988px;top:1730px" width="16" height="16"><path d="M16 0 V16 H0 A16 16 0 0 0 16 0 Z" fill="#c9c9c9"/></svg>
<div class="t" style="left:48px;top:1712.5px;font-size:23.3px;color:#555;font-weight:normal;-webkit-text-stroke:0.1px #555">Ready</div>
<div class="t" style="left:194.5px;top:1712.5px;font-size:25.5px;color:#555;font-weight:normal;-webkit-text-stroke:0.1px #555">Accessibility: Investigate</div>
<div class="t" style="left:779px;top:1712.5px;font-size:25.3px;color:#555;font-weight:normal;-webkit-text-stroke:0.1px #555">Average: 529.9166667</div>
<div class="t" style="left:1076px;top:1712.5px;font-size:25.3px;color:#555;font-weight:normal;-webkit-text-stroke:0.1px #555">Count: 20</div>
<div class="t" style="left:1228.5px;top:1712.5px;font-size:25.4px;color:#555;font-weight:normal;-webkit-text-stroke:0.1px #555">Sum: 6359</div>
<div class="t" style="left:1898.5px;top:1712.5px;font-size:24px;color:#555;font-weight:normal;-webkit-text-stroke:0.1px #555">100%</div>

<svg style="left:0;top:0" width="2004" height="1746" fill="none">
 <!-- accessibility icon -->
 <circle cx="170" cy="1713.5" r="3.8" stroke="#555" stroke-width="2"/>
 <path d="M158 1717 C163 1721 177 1721 182 1717 M170 1720 V1727 L164 1737 M170 1727 L173 1731" stroke="#555" stroke-width="2" stroke-linecap="round"/>
 <path d="M175 1728 L185 1738 M185 1728 L175 1738" stroke="#555" stroke-width="2"/>
 <!-- grid view -->
 <path d="M1398.5 1711.5 H1422.5 V1734.5 H1398.5 Z M1406.5 1711.5 V1734.5 M1414.5 1711.5 V1734.5 M1398.5 1719 H1422.5 M1398.5 1727 H1422.5" stroke="#fff" stroke-width="2"/>
 <!-- page layout -->
 <rect x="1469.5" y="1711.5" width="26" height="24" stroke="#555" stroke-width="2"/>
 <rect x="1474.5" y="1716" width="16" height="15" stroke="#555" stroke-width="1.5"/>
 <path d="M1477 1720 H1488 M1477 1723.5 H1488 M1477 1727 H1488" stroke="#555" stroke-width="1.5"/>
 <!-- page break -->
 <path d="M1539.5 1711.5 H1566.5 V1735.5 H1539.5 Z" stroke="#555" stroke-width="2"/>
 <path d="M1546 1711.5 V1723.5 H1553 V1711.5" stroke="#555" stroke-width="2"/>
 <!-- zoom -->
 <path d="M1604 1723 H1621" stroke="#555" stroke-width="3"/>
 <path d="M1848.5 1723 H1865 M1856.75 1714.75 V1731.25" stroke="#555" stroke-width="3"/>
</svg>
<div class="a" style="left:1635px;top:1720px;width:200px;height:6.5px;border-radius:3px;background:#a9a9a9"></div>
<div class="a" style="left:1718.5px;top:1707.5px;width:31px;height:31px;border-radius:50%;background:#fff;box-shadow:0 1px 2px rgba(0,0,0,.3)"></div>
</body></html>
